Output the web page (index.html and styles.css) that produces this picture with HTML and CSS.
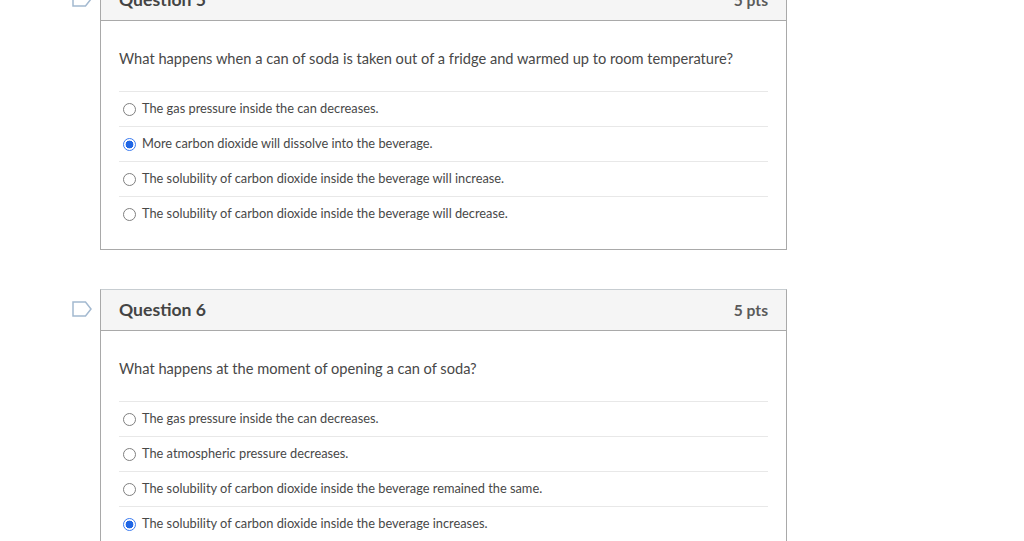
FILE: index.html
```html
<!DOCTYPE html>
<html lang="en">
<head>
<meta charset="utf-8">
<title>Quiz</title>
<link rel="stylesheet" href="styles.css">
</head>
<body>
<main class="quiz">
  <div class="item">
    <svg class="flag" width="20" height="16" viewBox="0 0 20 16"><path d="M1 1H13.500L19 8L13.500 15H1Z" fill="none" stroke="#a3b9d0" stroke-width="1.500"/></svg>
    <section class="card">
      <header class="head"><h2 class="title">Question 5</h2><span class="pts">5 pts</span></header>
      <div class="body">
        <p class="text">What happens when a can of soda is taken out of a fridge and warmed up to room temperature?</p>
        <ul class="answers">
          <li class="answer"><span class="radio"></span>The gas pressure inside the can decreases.</li>
          <li class="answer"><span class="radio on"></span>More carbon dioxide will dissolve into the beverage.</li>
          <li class="answer"><span class="radio"></span>The solubility of carbon dioxide inside the beverage will increase.</li>
          <li class="answer"><span class="radio"></span>The solubility of carbon dioxide inside the beverage will decrease.</li>
        </ul>
      </div>
    </section>
  </div>
  <div class="item">
    <svg class="flag" width="20" height="16" viewBox="0 0 20 16"><path d="M1 1H13.500L19 8L13.500 15H1Z" fill="none" stroke="#a3b9d0" stroke-width="1.500"/></svg>
    <section class="card">
      <header class="head"><h2 class="title">Question 6</h2><span class="pts">5 pts</span></header>
      <div class="body">
        <p class="text">What happens at the moment of opening a can of soda?</p>
        <ul class="answers">
          <li class="answer"><span class="radio"></span>The gas pressure inside the can decreases.</li>
          <li class="answer"><span class="radio"></span>The atmospheric pressure decreases.</li>
          <li class="answer"><span class="radio"></span>The solubility of carbon dioxide inside the beverage remained the same.</li>
          <li class="answer"><span class="radio on"></span>The solubility of carbon dioxide inside the beverage increases.</li>
        </ul>
      </div>
    </section>
  </div>
</main>
</body>
</html>
```
FILE: styles.css
```css
html, body {
  margin: 0;
  height: 541px;
  overflow: hidden;
  background: #fff;
}
body {
  font-family: Lato, "Liberation Sans", sans-serif;
  color: #2d3b45;
}
.quiz {
  display: flex;
  flex-direction: column;
  gap: 39px;
  width: 687px;
  margin: -21px 0 0 100px;
}
.item {
  position: relative;
}
.flag {
  position: absolute;
  left: -28px;
  top: 12px;
}
.card {
  border: 1px solid #a9a9a9;
  border-top-color: #c7cdd1;
}
.head {
  display: flex;
  justify-content: space-between;
  align-items: center;
  height: 40px;
  padding: 0 18px;
  background: #f5f5f5;
  border-bottom: 1px solid #a9a9a9;
}
.title {
  margin: 0 0 2px;
  font-size: 17.600px;
  font-weight: 700;
  color: #444;
}
.pts {
  font-size: 15.600px;
  font-weight: 700;
  color: #5a5a5a;
  margin-bottom: 1px;
}
.body {
  padding: 18px;
}
.text {
  margin: 0 0 23px;
  padding-top: 10px;
  font-size: 14.640px;
  line-height: 19px;
  color: #484848;
}
.answers {
  margin: 0;
  padding: 0;
  list-style: none;
}
.answer {
  display: flex;
  align-items: center;
  height: 32px;
  padding-bottom: 2px;
  border-top: 1px solid #e8e8e8;
  font-size: 12.800px;
  line-height: 32px;
  color: #484848;
}
.radio {
  box-sizing: border-box;
  width: 13px;
  height: 13px;
  margin: 2px 6px 0 4px;
  border: 1px solid #808080;
  border-radius: 50%;
  background: #fff;
}
.radio.on {
  border-color: #3b7bf0;
  background: radial-gradient(circle, #1f66e5 0 3.600px, #fff 4.200px);
}
```
